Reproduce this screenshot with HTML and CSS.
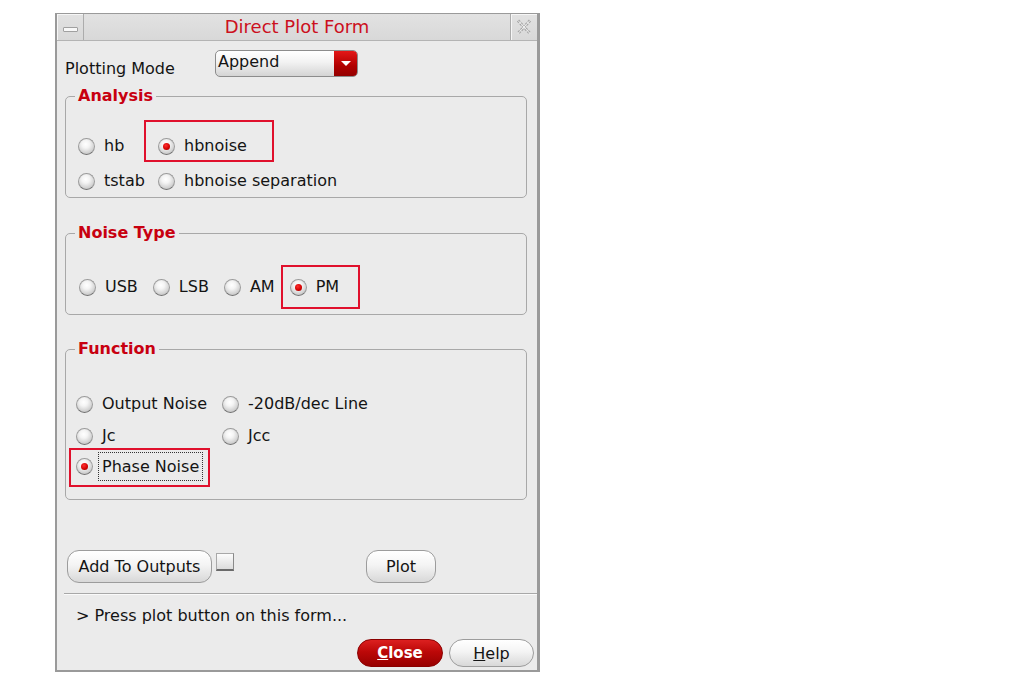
FILE: index.html
```html
<!DOCTYPE html>
<html lang="en">
<head>
    <meta charset="UTF-8">
    <title>Direct Plot Form</title>
    <link rel="stylesheet" href="styles.css">
</head>
<body>
    <div class="window">
        <!-- title bar -->
        <div class="titlebar">
            <div class="tb-btn tb-min"><span class="min-bar"></span></div>
            <div class="tb-title">Direct Plot Form</div>
            <div class="tb-btn tb-close">
                <svg class="x-icon" width="16" height="16" viewBox="0 0 16 16">
                    <path d="M2 1.5 L14 14.5 M14 1.5 L2 14.5" stroke="#a6a6a6" stroke-width="3" stroke-dasharray="2.4 1.2" fill="none"/>
                    <path d="M2 1.5 L14 14.5 M14 1.5 L2 14.5" stroke="#f0f0f0" stroke-width="1" fill="none"/>
                </svg>
            </div>
        </div>

        <div class="content">
            <div class="mode-row">
                <span class="mode-label">Plotting Mode</span>
                <div class="combo">
                    <span class="combo-text">Append</span>
                    <span class="combo-arrow"><span class="tri"></span></span>
                </div>
            </div>

            <fieldset class="group analysis">
                <legend>Analysis</legend>
                <div class="grid-analysis">
                    <label class="radio-item"><span class="radio"></span>hb</label>
                    <label class="radio-item has-mark"><span class="radio on"></span>hbnoise<span class="mark mark-hbnoise"></span></label>
                    <label class="radio-item"><span class="radio"></span>tstab</label>
                    <label class="radio-item"><span class="radio"></span>hbnoise separation</label>
                </div>
            </fieldset>

            <fieldset class="group noise">
                <legend>Noise Type</legend>
                <div class="noise-row">
                    <label class="radio-item"><span class="radio"></span>USB</label>
                    <label class="radio-item"><span class="radio"></span>LSB</label>
                    <label class="radio-item"><span class="radio"></span>AM</label>
                    <label class="radio-item has-mark"><span class="radio on"></span>PM<span class="mark mark-pm"></span></label>
                </div>
            </fieldset>

            <fieldset class="group function">
                <legend>Function</legend>
                <div class="grid-function">
                    <label class="radio-item"><span class="radio"></span>Output Noise</label>
                    <label class="radio-item"><span class="radio"></span>-20dB/dec Line</label>
                    <label class="radio-item row2"><span class="radio"></span>Jc</label>
                    <label class="radio-item row2"><span class="radio"></span>Jcc</label>
                    <label class="radio-item row3 has-mark"><span class="radio on"></span><span class="focus">Phase Noise</span><span class="mark mark-phase"></span></label>
                </div>
            </fieldset>

            <div class="action-row">
                <button class="btn btn-add">Add To Outputs</button>
                <span class="checkbox"></span>
                <button class="btn btn-plot">Plot</button>
            </div>

            <div class="separator"></div>

            <div class="status">&gt; Press plot button on this form...</div>

            <div class="bottom-row">
                <button class="btn btn-close"><u>C</u>lose</button>
                <button class="btn btn-help"><u>H</u>elp</button>
            </div>
        </div>
    </div>
</body>
</html>
```

FILE: styles.css
```css
/* page */
body {
    margin: 0;
    background: #fff;
    font-family: "DejaVu Sans", "Liberation Sans", sans-serif;
    font-size: 16px;
    color: #141414;
}

/* window frame */
.window {
    margin: 13px 0 0 55px;
    width: 485px;
    box-sizing: border-box;
    background: #ebebeb;
    border-style: solid;
    border-color: #9a9a9a;
    border-width: 1px 3px 2px 2px;
}

/* title bar */
.titlebar {
    display: flex;
    height: 27px;
    background: linear-gradient(#e2e2e2, #d8d8d8);
    border-bottom: 1px solid #b4b4b4;
    box-sizing: border-box;
}
.tb-btn {
    width: 27px;
    display: flex;
    align-items: center;
    justify-content: center;
    box-sizing: border-box;
    box-shadow: inset 1px 1px #f6f6f6;
}
.tb-min { border-right: 1px solid #acacac; padding-top: 4px; }
.tb-close { border-left: 1px solid #acacac; }
.x-icon { flex: none; }
.min-bar {
    width: 13px;
    height: 3px;
    background: #f8f8f8;
    border: 1px solid #a0a0a0;
    border-radius: 1px;
}
.tb-title {
    flex: 1;
    text-align: center;
    color: #cc1020;
    font-size: 18px;
    line-height: 26px;
}

/* content */
.content {
    padding: 9px 10px 3px 8px;
}

.mode-row {
    display: flex;
    align-items: flex-end;
    height: 27px;
}
.mode-label {
    width: 150px;
    line-height: 20px;
    margin-bottom: -2px;
}
.combo {
    display: flex;
    width: 143px;
    height: 27px;
    box-sizing: border-box;
    border: 1px solid #8c8c8c;
    border-radius: 5px;
    background: linear-gradient(#ffffff, #f2f2f2 45%, #d4d4d4);
    overflow: hidden;
    align-self: flex-start;
}
.combo-text {
    flex: 1;
    padding: 1px 0 0 2px;
    line-height: 20px;
}
.combo-arrow {
    width: 23px;
    background: linear-gradient(#e41818, #b00000 60%, #940000);
    display: flex;
    align-items: center;
    justify-content: center;
}
.tri {
    width: 0;
    height: 0;
    border-left: 5px solid transparent;
    border-right: 5px solid transparent;
    border-top: 5px solid #fff;
}

/* group boxes */
.group {
    margin: 0;
    border: 1px solid #a8a8a8;
    border-radius: 5px;
    padding: 0 0 0 9px;
    min-width: 0;
}
.group legend {
    color: #c80010;
    font-weight: bold;
    line-height: 18px;
    padding: 0 3px;
}
.analysis { margin-top: 10px; padding-top: 29px; padding-bottom: 4px; }
.noise { margin-top: 26px; padding-top: 33px; padding-bottom: 15px; }
.function { margin-top: 25px; padding-top: 34px; padding-bottom: 21px; }

.grid-analysis {
    display: grid;
    grid-template-columns: 80px auto;
    row-gap: 11px;
    padding-left: 3px;
}
.noise-row {
    display: flex;
    gap: 15px;
    padding-left: 4px;
}
.grid-function {
    display: grid;
    grid-template-columns: 146px auto;
    padding-left: 1px;
}
.grid-function .row2 { margin-top: 8px; }
.grid-function .row3 { margin-top: 6px; }

/* radio buttons */
.radio-item {
    display: flex;
    align-items: center;
    gap: 9px;
    height: 24px;
    line-height: 24px;
    white-space: nowrap;
}
.has-mark { position: relative; }
.radio {
    width: 17px;
    height: 17px;
    box-sizing: border-box;
    border-radius: 50%;
    border: 1px solid #9c9c9c;
    border-bottom-color: #707070;
    background: radial-gradient(circle at 45% 35%, #ffffff 0, #f4f4f4 30%, #cacaca 75%, #aaaaaa 100%);
    display: flex;
    align-items: center;
    justify-content: center;
    flex: none;
}
.radio.on::after {
    content: "";
    width: 7px;
    height: 7px;
    border-radius: 50%;
    background: radial-gradient(circle at 40% 35%, #ff3030, #d00000 60%, #900000);
}

/* focus rectangle */
.focus {
    margin-left: -4px;
    padding: 0 3px;
    line-height: 27px;
    border: 1px dotted #333;
}

/* red annotation boxes */
.mark {
    position: absolute;
    border: 2px solid #e0102c;
    box-sizing: border-box;
    pointer-events: none;
}
.mark-hbnoise { left: -14px; top: -14px; width: 130px; height: 42px; }
.mark-pm { left: -9px; top: -10px; width: 79px; height: 44px; }
.mark-phase { left: -7px; top: -6px; width: 141px; height: 39px; }

/* buttons */
.btn {
    font-family: inherit;
    font-size: 16px;
    color: #141414;
    box-sizing: border-box;
    border: 1px solid #9c9c9c;
    background: linear-gradient(#ffffff, #f4f4f4 45%, #d8d8d8);
    padding: 0;
    cursor: pointer;
}
.action-row {
    display: flex;
    align-items: flex-start;
    margin-top: 50px;
}
.btn-add {
    margin-left: 2px;
    width: 145px;
    height: 33px;
    border-radius: 12px;
}
.checkbox {
    width: 18px;
    height: 18px;
    margin: 3px 0 0 4px;
    box-sizing: border-box;
    border: 1px solid #a8a8a8;
    border-bottom: 2px solid #6a6a6a;
    border-right-color: #8a8a8a;
    background: linear-gradient(#fcfcfc, #dcdcdc);
}
.btn-plot {
    margin-left: 132px;
    width: 70px;
    height: 33px;
    border-radius: 12px;
}

.separator {
    margin: 10px -10px 0 -1px;
    border-top: 1px solid #a8a8a8;
    border-bottom: 1px solid #fafafa;
}
.status {
    margin-top: 11px;
    padding-left: 11px;
    line-height: 20px;
}

.bottom-row {
    display: flex;
    justify-content: flex-end;
    gap: 6px;
    margin: 13px -7px 0 0;
}
.btn-close, .btn-help {
    height: 28px;
    border-radius: 14px;
}
.btn-close {
    width: 86px;
    color: #fff;
    font-weight: bold;
    font-size: 15px;
    border-color: #8a0000;
    background: linear-gradient(#dc2020, #bc0808 45%, #980000);
}
.btn-help {
    width: 85px;
}
```
